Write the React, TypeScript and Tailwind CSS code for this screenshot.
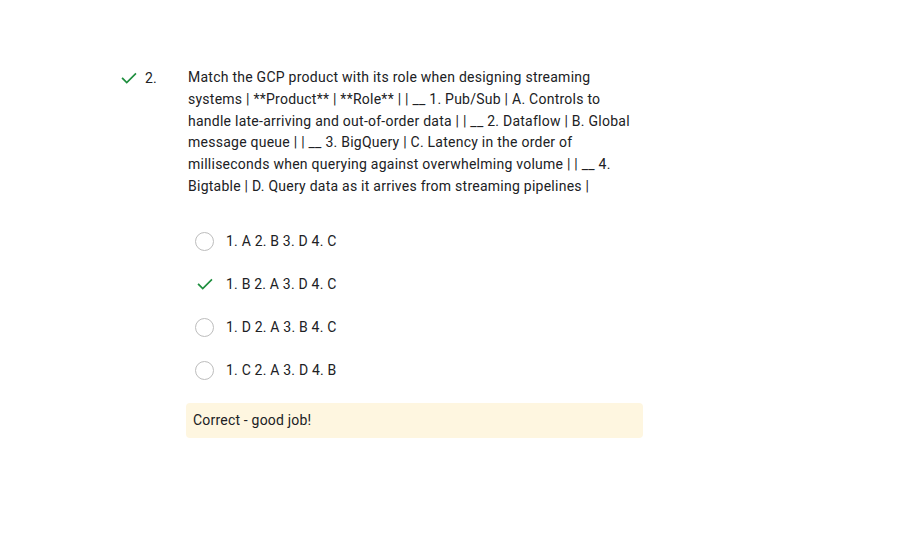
import React from "react";

const Check = ({ className = "" }: { className?: string }) => (
  <svg viewBox="0 0 24 24" className={className} fill="none" stroke="#1e8e3e" strokeWidth="2.2" strokeLinecap="square">
    <path d="M3.5 12.5 L9 18 L20.5 6.5" />
  </svg>
);

const options = [
  { label: "1. A 2. B 3. D 4. C", correct: false },
  { label: "1. B 2. A 3. D 4. C", correct: true },
  { label: "1. D 2. A 3. B 4. C", correct: false },
  { label: "1. C 2. A 3. D 4. B", correct: false },
];

export default function App() {
  return (
    <div className="min-h-[549px] w-[905px] bg-white text-[#202124] tracking-[0.2px]" style={{ fontFamily: "Roboto, 'Noto Sans', sans-serif" }}>
      <div className="flex pl-[120px] pt-[67px]">
        <div className="flex w-[66px] items-start">
          <div className="flex h-[22px] items-center">
            <Check className="h-[18px] w-[18px]" />
            <span className="ml-[7px] text-[14px]">2.</span>
          </div>
        </div>
        <div className="w-[457px]">
          <p className="w-[447px] pl-[2px] text-[14px] leading-[21.8px] tracking-[0.25px]">
            Match the GCP product with its role when designing streaming systems | **Product** | **Role** | | __ 1. Pub/Sub | A. Controls to handle late-arriving and out-of-order data | | __ 2. Dataflow | B. Global message queue | | __ 3. BigQuery | C. Latency in the order of milliseconds when querying against overwhelming volume | | __ 4. Bigtable | D. Query data as it arrives from streaming pipelines |
          </p>
          <div className="mt-[22px] pl-[9px]">
            {options.map((o) => (
              <div key={o.label} className="flex h-[43px] items-center">
                <div className="flex h-[19px] w-[19px] items-center justify-center">
                  {o.correct ? (
                    <Check className="h-[18px] w-[18px]" />
                  ) : (
                    <div className="h-[19px] w-[19px] rounded-full border-[1.5px] border-[#bdbdbd]" />
                  )}
                </div>
                <span className="ml-[12px] text-[14px]">{o.label}</span>
              </div>
            ))}
          </div>
          <div className="mt-[11px] flex h-[35px] items-center rounded-[4px] bg-[#fef6e0] pl-[7px] text-[14px]">
            Correct - good job!
          </div>
        </div>
      </div>
    </div>
  );
}
